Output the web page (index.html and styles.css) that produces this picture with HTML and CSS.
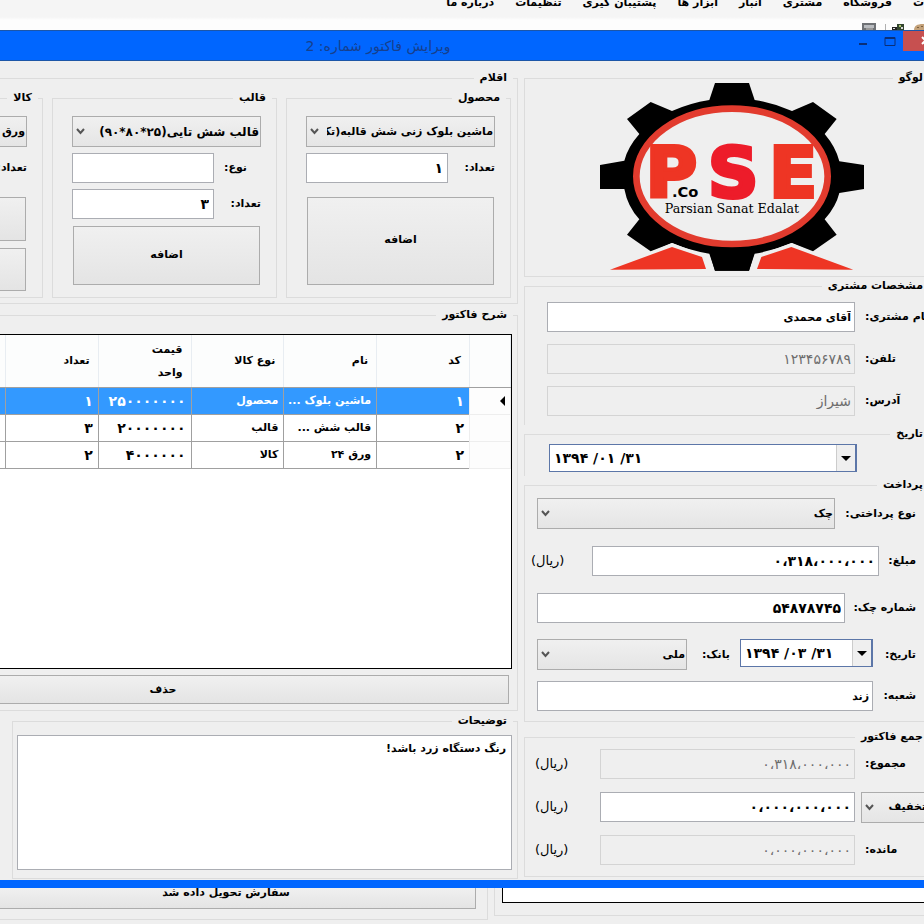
FILE: index.html
```html
<!DOCTYPE html>
<html lang="fa" dir="rtl">
<head>
<meta charset="utf-8">
<title>ویرایش فاکتور</title>
<link rel="stylesheet" href="styles.css">
</head>
<body>
<header class="app-head">
  <nav class="menu">
    <a href="#">ت</a><a href="#">فروشگاه</a><a href="#">مشتری</a><a href="#">انبار</a><a href="#">ابزار ها</a><a href="#">پشتیبان گیری</a><a href="#">تنظیمات</a><a href="#">درباره ما</a>
  </nav>
  <svg class="tools" width="64" height="8" viewBox="0 0 64 8" aria-hidden="true">
    <path d="M2 1h14v7H2z" fill="#6f7276"/><path d="M4 3h10v3H4z" fill="#b9bcc0"/><path d="M6 6h7v2H6z" fill="#999"/>
    <path d="M25 2h1v6h-1z" fill="#b0b0b0"/>
    <path d="M32 5h6v3h-6z" fill="#222"/><path d="M33 6h2v1h-2z" fill="#ddd"/><path d="M37 2h7v6h-7z" fill="#33452f"/><path d="M39 3h2v2h-2z" fill="#a9c66c"/><path d="M41 5h2v2h-2z" fill="#d8d8d8"/>
    <path d="M54 8c0-4 3-6 9-6h1v6z" fill="#c3a179"/><path d="M57 5h2v1h-2zM61 4h2v1h-2z" fill="#7c6040"/>
  </svg>
</header>

<main class="window">
  <div class="titlebar">
    <div class="win-controls">
      <button class="win-close" aria-label="بستن"><svg width="10" height="10" viewBox="0 0 10 10"><path d="M1 1l7 7M8 1l-7 7" stroke="#fff" stroke-width="2"/></svg></button>
      <button class="win-btn" aria-label="بزرگ"><svg width="12" height="10" viewBox="0 0 12 10"><path d="M1 1.500h10v8H1z" fill="none" stroke="#0a2f78"/><path d="M1 1h10v2H1z" fill="#0a2f78"/></svg></button>
      <button class="win-btn" aria-label="کوچک"><svg width="12" height="10" viewBox="0 0 12 10"><path d="M2 7h8v2H2z" fill="#0a2f78"/></svg></button>
    </div>
    <h1>ویرایش فاکتور شماره: 2</h1>
  </div>

  <div class="content">
    <section class="side">
      <fieldset class="logo-box">
        <legend>لوگو</legend>
        <svg class="logo" width="264" height="188" viewBox="30 249 792 564" role="img" aria-label="PSE">
          <path d="M375 249H477L494 300Q552 309 606 333L669 306L740 357L704 402Q738 442 748 484L822 495V567L748 579Q738 620 704 658L740 704L669 754L606 729Q552 752 494 761L477 812H375L358 761Q300 752 246 729L182 754L111 704L148 658Q113 620 103 567L30 567V495L103 482Q113 442 148 402L111 357L182 306L246 333Q300 309 358 300Z"/>
          <path d="M30 822L246 729L340 764L362 822ZM822 822L604 729L508 764L488 822Z" fill="#efefef"/>
          <path d="M375 812L358 755H494L477 812Z"/>
          <path d="M60 809L246 741L336 771L348 807ZM790 809L604 741L514 771L501 807Z" fill="#ee3524"/>
          <ellipse cx="426" cy="529" rx="287" ry="203" fill="#efefef" stroke="#e23b2e" stroke-width="20"/>
          <text class="logo-letter" x="167" y="590">P</text>
          <text class="logo-letter logo-s" x="354" y="590">S</text>
          <text class="logo-letter" x="538" y="590">E</text>
          <text class="logo-co" x="246" y="592">.Co</text>
          <text class="logo-name" x="426" y="640">Parsian Sanat Edalat</text>
        </svg>
      </fieldset>

      <fieldset class="customer open">
        <legend>مشخصات مشتری</legend>
        <div class="row"><label class="lab-end" for="cname">نام مشتری:</label><input id="cname" value="آقای محمدی"></div>
        <div class="row"><label class="lab-end" for="tel">تلفن:</label><input id="tel" value="۱۲۳۴۵۶۷۸۹" disabled></div>
        <div class="row"><label class="lab-end" for="addr">آدرس:</label><input id="addr" value="شیراز" disabled></div>
      </fieldset>

      <fieldset class="date-box open">
        <legend>تاریخ</legend>
        <div class="date"><input class="num" aria-label="تاریخ" value="۱۳۹۴ /۰۱ /۳۱"><button aria-label="تقویم"><svg width="10" height="5" viewBox="0 0 10 5"><path d="M0 0h10L5 5z"/></svg></button></div>
      </fieldset>

      <fieldset class="payment">
        <legend>پرداخت</legend>
        <div class="row"><label class="w-xl" for="ptype">نوع پرداختی:</label><span class="select"><select id="ptype"><option>چک</option></select><svg width="9" height="7" viewBox="0 0 9 7"><path d="M1 1l3.500 4L8 1"/></svg></span></div>
        <div class="row"><label class="w-s" for="amount">مبلغ:</label><input class="num" id="amount" value="۰،۳۱۸،۰۰۰،۰۰۰"><span class="unit">(ریال)</span></div>
        <div class="row"><label class="w-l" for="cheque">شماره چک:</label><input class="num" id="cheque" value="۵۴۸۷۸۷۴۵"></div>
        <div class="row"><label class="w-m" for="cdate">تاریخ:</label><div class="date date-small"><input class="num" id="cdate" value="۱۳۹۴ /۰۳ /۳۱"><button aria-label="تقویم"><svg width="10" height="5" viewBox="0 0 10 5"><path d="M0 0h10L5 5z"/></svg></button></div><label class="w-m" for="bank">بانک:</label><span class="select"><select id="bank"><option>ملی</option></select><svg width="9" height="7" viewBox="0 0 9 7"><path d="M1 1l3.500 4L8 1"/></svg></span></div>
        <div class="row row-tight"><label class="w-m" for="branch">شعبه:</label><input id="branch" value="زند"></div>
      </fieldset>

      <fieldset class="totals">
        <legend>جمع فاکتور</legend>
        <div class="row"><label class="lab-end" for="sum">مجموع:</label><input id="sum" value="۰،۳۱۸،۰۰۰،۰۰۰" disabled><span class="unit">(ریال)</span></div>
        <div class="row"><span class="select discount"><select aria-label="تخفیف"><option>تخفیف</option></select><svg width="9" height="7" viewBox="0 0 9 7"><path d="M1 1l3.500 4L8 1"/></svg></span><input class="num" aria-label="مبلغ تخفیف" value="۰،۰۰۰،۰۰۰،۰۰۰"><span class="unit">(ریال)</span></div>
        <div class="row"><label class="lab-end" for="rest">مانده:</label><input id="rest" value="۰،۰۰۰،۰۰۰،۰۰۰" disabled><span class="unit">(ریال)</span></div>
      </fieldset>
    </section>

    <section class="work">
      <fieldset class="items">
        <legend>اقلام</legend>
        <div class="panels">
          <fieldset class="panel">
            <legend>محصول</legend>
            <span class="select"><select aria-label="محصول"><option>ماشین بلوک زنی شش قالبه(تک</option></select><svg width="9" height="7" viewBox="0 0 9 7"><path d="M1 1l3.500 4L8 1"/></svg></span>
            <div class="row"><label for="pq">تعداد:</label><input class="num" id="pq" value="۱"></div>
            <button class="btn btn-low">اضافه</button>
          </fieldset>
          <fieldset class="panel">
            <legend>قالب</legend>
            <span class="select select-size"><select aria-label="قالب"><option>قالب شش تایی(۲۵*۸۰*۹۰)</option></select><svg width="9" height="7" viewBox="0 0 9 7"><path d="M1 1l3.500 4L8 1"/></svg></span>
            <div class="row"><label class="lab-end" for="mk">نوع:</label><input id="mk"></div>
            <div class="row"><label for="mq">تعداد:</label><input class="num" id="mq" value="۳"></div>
            <button class="btn">اضافه</button>
          </fieldset>
          <fieldset class="panel panel-goods">
            <legend>کالا</legend>
            <span class="select"><select aria-label="کالا"><option>ورق ۲۴</option></select></span>
            <div class="row"><label for="gq">تعداد:</label><input class="num" id="gq" value="۲"></div>
            <button class="btn btn-low" aria-label="اضافه"></button>
            <button class="btn" aria-label="کالای جدید"></button>
          </fieldset>
        </div>
      </fieldset>

      <fieldset class="lines">
        <legend>شرح فاکتور</legend>
        <div class="grid-view">
          <table>
            <colgroup><col class="c-head"><col><col><col><col><col><col></colgroup>
            <thead><tr><th></th><th>کد</th><th>نام</th><th>نوع کالا</th><th>قیمت<br>واحد</th><th>تعداد</th><th></th></tr></thead>
            <tbody>
              <tr class="selected"><th><svg width="5" height="10" viewBox="0 0 5 10"><path d="M5 0v10L0 5z"/></svg></th><td class="num">۱</td><td>ماشین بلوک ...</td><td>محصول</td><td class="num">۲۵۰۰۰۰۰۰۰</td><td class="num">۱</td><td></td></tr>
              <tr><th></th><td class="num">۲</td><td>قالب شش ...</td><td>قالب</td><td class="num">۲۰۰۰۰۰۰۰</td><td class="num">۳</td><td></td></tr>
              <tr><th></th><td class="num">۲</td><td>ورق ۲۴</td><td>کالا</td><td class="num">۴۰۰۰۰۰۰</td><td class="num">۲</td><td></td></tr>
            </tbody>
          </table>
        </div>
        <button class="btn delete">حذف</button>
      </fieldset>

      <fieldset class="notes">
        <legend>توضیحات</legend>
        <textarea aria-label="توضیحات">رنگ دستگاه زرد باشد!</textarea>
      </fieldset>
    </section>
  </div>
</main>

<footer class="behind">
  <div class="behind-list"><div class="behind-view"></div></div>
  <div class="behind-actions"><button class="btn">سفارش تحویل داده شد</button></div>
</footer>
</body>
</html>
```
FILE: styles.css
```css
* { box-sizing: border-box; }

html, body { margin: 0; height: 100%; overflow: hidden; }

body {
  display: flex;
  flex-direction: column;
  background: #efefef;
  color: #000;
  font: bold 11px/18px "DejaVu Sans", sans-serif;
}

input, select, button, textarea { font: inherit; color: inherit; margin: 0; border-radius: 0; }

/* Main application strip above the window */
.app-head {
  flex: none;
  height: 30px;
  display: flex;
  flex-direction: column;
  justify-content: space-between;
  background: linear-gradient(#f5f5f5 0 17px, #fdfdfd 20px);
}
.menu { display: flex; gap: 21px; line-height: 6px; white-space: nowrap; }
.menu a { color: #000; text-decoration: none; }
.tools { display: block; }

/* Window frame */
.window {
  flex: none;
  background: #efefef;
  border-bottom: 8px solid #06f;
}
.titlebar {
  display: flex;
  height: 31px;
  background: #06f;
  border-top: 1px solid #1c56a8;
  border-bottom: 1px solid #1c56a8;
}
.titlebar h1 {
  flex: 1;
  margin: 0;
  font-size: 14px;
  font-weight: normal;
  line-height: 31px;
  text-align: center;
  color: #173f8c;
}
.win-controls { display: flex; flex: none; width: 168px; align-items: flex-start; margin-inline-start: -24px; margin-inline-end: 24px; }
.win-close, .win-btn { height: 20px; border: 0; padding: 0; background: none; }
.win-close { width: 45px; background: #c75050; }
.win-btn { width: 27px; }
.win-close svg, .win-btn svg { display: block; margin: auto; }

.content {
  display: grid;
  grid-template-columns: minmax(0, 400fr) minmax(0, 518fr);
  gap: 6px;
  padding: 8px 0 1px;
}
.side { margin-inline-start: -12px; --lead: 6px; }
.work { --lead: 4px; }

/* --pad is the space on the right of the group's content; the caption ignores it */
fieldset {
  --pad: 0px;
  min-width: 0;
  margin: 0;
  padding: 0 var(--pad) 0 0;
  border: 1px solid #dcdcdc;
}
legend { padding: 0 6px; margin-inline-start: calc(var(--lead) - var(--pad)); height: 18px; }
.open { border-bottom: 0; }

.row { display: flex; align-items: center; gap: 10px; }
.row label { flex: none; white-space: nowrap; }

input {
  flex: 1;
  min-width: 0;
  height: 30px;
  padding: 0 3px;
  border: 1px solid #abadb3;
  background: #fff;
}
.num { font-size: 14px; }
input:disabled { color: #6d6d6d; font-size: 14px; font-weight: normal; background: #efefef; border-color: #d4d4d4; }

.select { position: relative; display: block; flex: 1; min-width: 0; }
.select select {
  display: block;
  width: 100%;
  height: 31px;
  padding: 0 1px 0 20px;
  appearance: none;
  border: 1px solid #acacac;
  background: linear-gradient(#f0f0f0, #e5e5e5);
}
.select svg { position: absolute; left: 4px; top: 12px; fill: none; stroke: #555; stroke-width: 2; }
.select-size select { font-size: 12px; }

.btn { border: 1px solid #acacac; background: linear-gradient(#f0f0f0, #e4e4e4); padding: 0; }

.logo-box { padding-bottom: 5px; padding-left: 4px; }
.logo { display: block; margin: -4px auto 0; }
.logo text { direction: ltr; }
.logo-letter { font: bold 210px "DejaVu Sans", sans-serif; fill: #ee3524; stroke: #ee3524; stroke-width: 12px; }
.logo-s { fill: #ed1c2a; stroke: #ed1c2a; }
.logo-co { font: bold 44px "DejaVu Sans", sans-serif; }
.logo-name { font: 38px "DejaVu Serif", serif; text-anchor: middle; }

.customer { display: grid; gap: 12px; padding: 7px 0 9px 22px; }
.lab-end { width: 70px; text-align: end; }

.date-box { --pad: 78px; padding: 1px var(--pad) 4px 24px; }
.date { display: flex; height: 28px; border: 1px solid #5c76a8; border-right-width: 2px; background: #fff; }
.date input { order: 2; direction: ltr; height: 26px; border: 0; padding: 0 4px; }
.date button { order: 1; width: 19px; border: 0; border-left: 1px solid #ccc; background: #efefef; padding: 0; }
.date button svg { display: block; margin: auto; }

.payment { --pad: 19px; display: grid; gap: 16px; padding: 4px var(--pad) 10px 12px; }
.payment .row { min-height: 31px; }
.payment .row-tight { min-height: 30px; margin-top: -5px; }
.w-xl { width: 71px; }
.w-l { width: 61px; }
.w-m { width: 33px; }
.w-s { width: 27px; }
.date-small { flex: none; width: 133px; align-self: flex-start; }
.unit { flex: none; width: 55px; text-align: end; margin-inline-end: -6px; font-size: 13px; font-weight: normal; }
.payment .unit { width: 51px; }

.totals { display: grid; gap: 13px; padding: 3px 0 11px 10px; margin-top: 6px; }
.totals .unit { margin: 0; }
.totals .row { height: 30px; }
.discount { flex: none; width: 74px; margin-inline-end: -4px; }
.discount select { padding-inline-start: 8px; }

.items { --pad: 6px; padding: 2px var(--pad) 5px 0; margin-left: -8px; }
.panels { display: flex; gap: 9px; }
.panel {
  --pad: 15px;
  flex: none;
  width: 225px;
  height: 209px;
  display: flex;
  flex-direction: column;
  gap: 6px;
  padding: 9px var(--pad) 12px 19px;
}
.panel .select { flex: none; }
.panel input { flex: none; width: 142px; padding: 0 4px; }
.panel .row { justify-content: space-between; gap: 0; }
.panel .lab-end { width: 37px; }
.panel .btn { flex: 1; margin: 1px 1px 0; padding-bottom: 2px; }
.panel .btn-low { margin-top: 8px; }
.panel-goods { padding-bottom: 6px; }

.lines { --pad: 5px; padding: 10px var(--pad) 6px 0; margin: 2px 0 0 -8px; }
.grid-view { height: 335px; background: #fff; border: 1px solid #000; overflow: hidden; }
.grid-view table { width: 599px; table-layout: fixed; border-collapse: collapse; }
.c-head { width: 41px; }
th, td { padding: 0 5px 0 2px; text-align: start; white-space: nowrap; overflow: hidden; border: 1px solid #a0a0a0; }
thead th { height: 52px; padding-inline-start: 8px; line-height: 23px; background: #fcfdfd; border-color: #fcfdfd #e8edf2 #a0a0a0; border-top: 0; }
tbody tr { height: 27px; }
tbody th { background: #fdfdfd; border-color: #eee; }
tbody th svg { display: block; }
.selected td { background: #39f; color: #fff; }
.delete { display: block; width: calc(100% - 3px); height: 29px; margin: 6px 3px 0 0; padding: 0 176px 0 0; }

.notes { --pad: 5px; margin: 1px 0 0 12px; padding: 5px var(--pad) 8px 4px; }
.notes textarea { display: block; width: 100%; height: 135px; padding: 4px 5px; resize: none; border: 1px solid #abadb3; background: #fff; }

/* Application area visible below the window */
.behind {
  flex: 1;
  display: grid;
  grid-template-columns: minmax(0, 430fr) minmax(0, 488fr);
  gap: 6px;
  min-height: 36px;
  padding-bottom: 4px;
}
.behind-list { border: 1px solid #dcdcdc; border-width: 0 0 1px 1px; padding-left: 7px; margin-bottom: 4px; }
.behind-view { height: 15px; background: #fff; border: 1px solid #000; border-width: 0 0 1px 1px; }
.behind-actions { border: 1px solid #dcdcdc; border-width: 0 1px 1px 0; padding-right: 11px; }
.behind-actions .btn { display: block; width: calc(100% + 24px); height: 21px; border-top: 0; line-height: 10px; padding-bottom: 10px; }
```
